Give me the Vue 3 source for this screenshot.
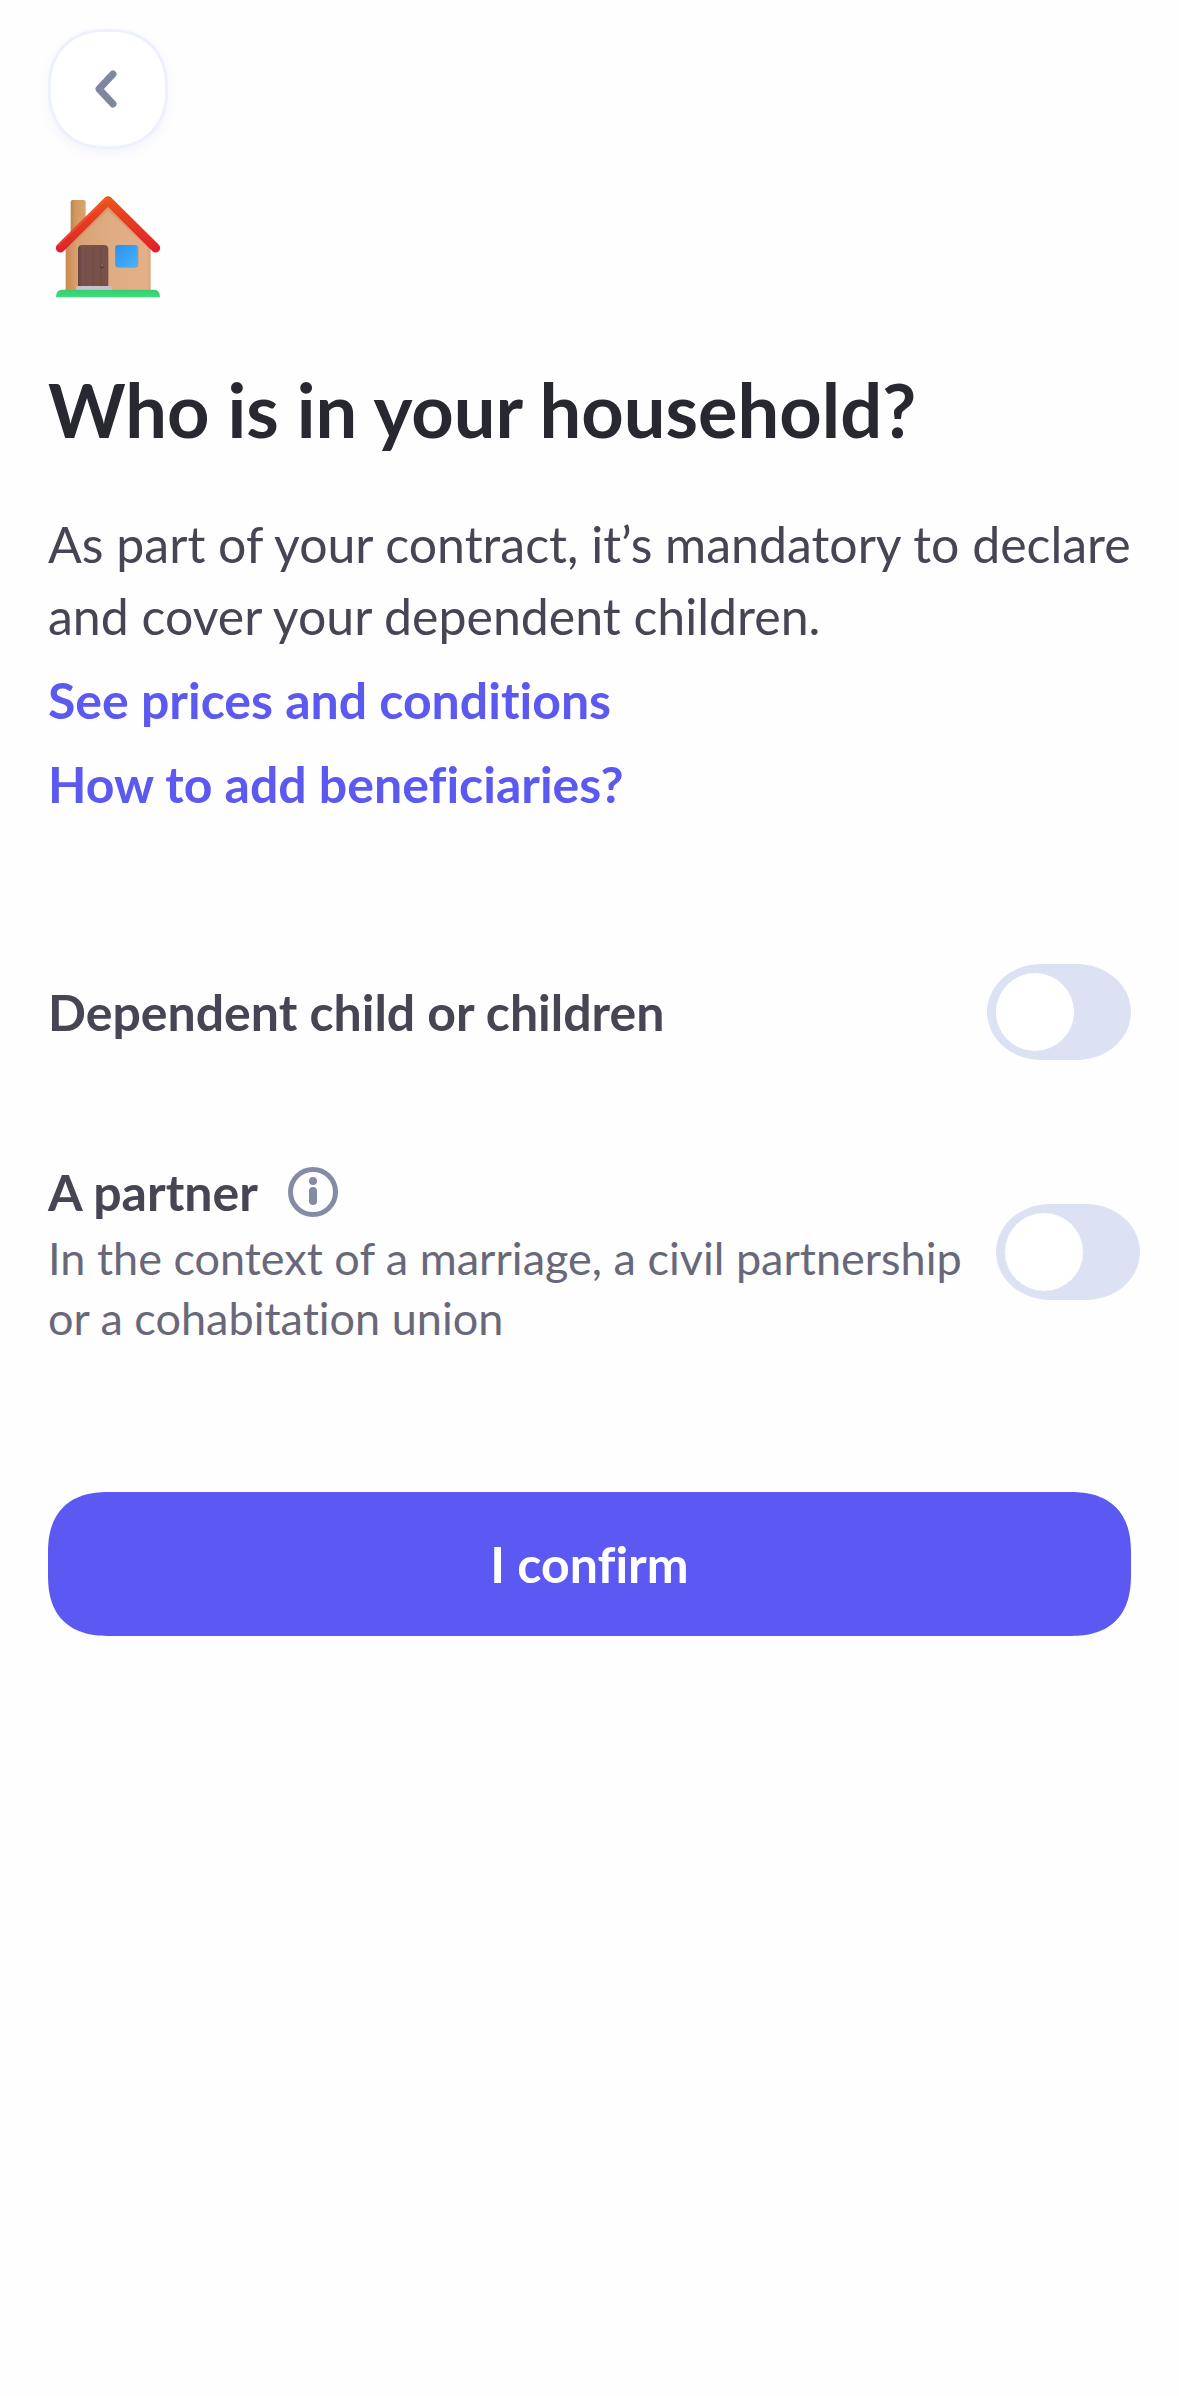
<script setup>
import { ref } from "vue";

// variables
const hasChildren = ref(false);
const hasPartner = ref(false);

// functions
function goBack() {
  window.history.back();
}
function showPartnerInfo() {
}
function confirm() {
}
</script>
<template>
  <main class="page">
    <button class="back" type="button" aria-label="Back" @click="goBack">
      <svg width="120" height="120" viewBox="0 0 120 120">
        <path d="M65 45 L51 60 L65 75" />
      </svg>
    </button>

    <svg class="house" width="120" height="120" viewBox="24 24 360 360" aria-hidden="true">
      <defs>
        <linearGradient id="wall" x1="0" x2="1" y1="0" y2="0">
          <stop offset="0" stop-color="#c98a50" />
          <stop offset="0.14" stop-color="#d9a274" />
          <stop offset="0.5" stop-color="#dfab82" />
          <stop offset="0.95" stop-color="#e4b088" />
          <stop offset="1" stop-color="#d9a47a" />
        </linearGradient>
        <linearGradient id="chimney" x1="0" x2="1" y1="0" y2="0">
          <stop offset="0" stop-color="#b98550" />
          <stop offset="0.3" stop-color="#cf985f" />
          <stop offset="1" stop-color="#d9a66e" />
        </linearGradient>
        <linearGradient id="roof" gradientUnits="userSpaceOnUse" x1="0" x2="0" y1="50" y2="215">
          <stop offset="0" stop-color="#ea5a1c" />
          <stop offset="0.35" stop-color="#e8401f" />
          <stop offset="1" stop-color="#e0202c" />
        </linearGradient>
        <linearGradient id="pane" x1="0" x2="1" y1="0" y2="1">
          <stop offset="0" stop-color="#2b8fee" />
          <stop offset="0.5" stop-color="#3aa2f5" />
          <stop offset="1" stop-color="#48b4f8" />
        </linearGradient>
        <linearGradient id="door" x1="0" x2="1" y1="0" y2="0">
          <stop offset="0" stop-color="#65423f" />
          <stop offset="0.15" stop-color="#7a524d" />
          <stop offset="1" stop-color="#765049" />
        </linearGradient>
        <linearGradient id="grass" x1="0" x2="0" y1="0" y2="1">
          <stop offset="0" stop-color="#38cc70" />
          <stop offset="1" stop-color="#3bdf7c" />
        </linearGradient>
      </defs>
      <path d="M92 66 Q92 60 98 60 H131 Q137 60 137 66 V150 L92 190 Z" fill="url(#chimney)" />
      <path d="M77 195 L204 74 L332 195 V332 H77 Z" fill="url(#wall)" />
      <path d="M77 202 L204 84 L332 202" fill="none" stroke="#c98252" stroke-width="12" opacity="0.35" />
      <path d="M61 204 L204 62 L347 204" fill="none" stroke="url(#roof)" stroke-width="27" stroke-linecap="round" stroke-linejoin="round" />
      <path d="M56 195 L197 56" fill="none" stroke="#f4684a" stroke-width="5" stroke-linecap="round" opacity="0.45" />
      <path d="M114 322 V208 Q114 195 127 195 H192 Q205 195 205 208 V322 Z" fill="url(#door)" />
      <path d="M137 198 V320 M160 198 V320 M182 198 V320" stroke="#694440" stroke-width="2" opacity="0.5" />
      <rect x="180" y="251" width="11" height="14" rx="5" fill="#5a3534" />
      <circle cx="186" cy="256" r="4" fill="#8e625a" />
      <rect x="226" y="195" width="69" height="68" rx="9" fill="#c98a60" />
      <rect x="226" y="195" width="66" height="66" rx="8" fill="url(#pane)" />
      <path d="M48 352 Q48 329 66 329 H342 Q360 329 360 352 Z" fill="url(#grass)" />
      <path d="M108 329 V323 Q108 318 114 318 H209 Q215 318 215 323 V329 Z" fill="#c9c0c8" />
    </svg>

    <h1>Who is in your household?</h1>

    <div class="intro">
      <p>
        As part of your contract, it’s mandatory to declare and cover your
        dependent children.
      </p>
      <a href="#prices">See prices and conditions</a>
      <a href="#beneficiaries">How to add beneficiaries?</a>
    </div>

    <div class="options">
      <div class="option">
        <label class="name" for="children">Dependent child or children</label>
        <input id="children" v-model="hasChildren" class="toggle" type="checkbox" role="switch" />
      </div>
      <div class="option detailed">
        <div>
          <div class="nameLine">
            <label class="name" for="partner">A partner</label>
            <button class="info" type="button" aria-label="More about partners" @click="showPartnerInfo">
              <svg width="50" height="50" viewBox="0 0 50 50">
                <circle cx="25" cy="25" r="22.5" fill="none" stroke="#858ba3" stroke-width="5" />
                <circle cx="25" cy="14" r="4" fill="#858ba3" />
                <rect x="21" y="20" width="8" height="18" rx="4" fill="#858ba3" />
              </svg>
            </button>
          </div>
          <p class="description">
            In the context of a marriage, a civil partnership or a cohabitation union
          </p>
        </div>
        <input id="partner" v-model="hasPartner" class="toggle" type="checkbox" role="switch" />
      </div>
    </div>

    <button class="confirm" type="button" @click="confirm">I confirm</button>
  </main>
</template>

<style>
body {
  margin: 0;
  background: #fefeff;
}
</style>

<style scoped>
.page {
  display: flex;
  flex-direction: column;
  align-items: stretch;
  padding: 29px 48px;
  font-family: Lato, "Noto Sans", sans-serif;
  font-size: 50px;
  line-height: 72px;
  font-variant-ligatures: no-common-ligatures;
  color: #464553;
}

button {
  padding: 0;
  border: 0;
  font: inherit;
  font-variant-ligatures: inherit;
  cursor: pointer;
}

svg {
  display: block;
}

.back {
  align-self: flex-start;
  border-radius: 50px;
  background: #fff;
  box-shadow: inset 0 0 0 3px #edf1fd, 0 4px 12px rgba(80, 90, 160, 0.06);
}

.back path {
  fill: none;
  stroke: #7f86a0;
  stroke-width: 7;
  stroke-linecap: round;
  stroke-linejoin: round;
}

.house {
  margin-top: 39px;
}

h1 {
  margin: 60px 0 56px;
  font-size: 74px;
  line-height: 84px;
  font-weight: 700;
  color: #282830;
}

p {
  margin: 0;
}

.intro {
  display: flex;
  flex-direction: column;
  align-items: flex-start;
  gap: 12px;
}

.intro a {
  font-weight: 700;
  color: #5c59f0;
  text-decoration: none;
}

.options {
  display: flex;
  flex-direction: column;
  gap: 96px;
  margin: 144px 0;
}

.option {
  display: flex;
  align-items: center;
  justify-content: space-between;
  gap: 24px;
}

.detailed {
  margin-right: -9px;
}

.name {
  font-weight: 700;
}

.nameLine {
  display: flex;
  align-items: center;
  gap: 30px;
}

.info {
  background: none;
}

.description {
  font-size: 45px;
  line-height: 60px;
  color: #686879;
}

.toggle {
  flex: none;
  appearance: none;
  width: 144px;
  height: 96px;
  margin: 0;
  padding: 9px;
  border-radius: 54px / 48px;
  background: #dce1f4;
  cursor: pointer;
}

.toggle::before {
  content: "";
  display: block;
  width: 78px;
  height: 78px;
  border-radius: 50%;
  background: #fff;
}

.toggle:checked {
  background: #5c59f0;
}

.toggle:checked::before {
  margin-left: auto;
}

.confirm {
  height: 144px;
  border-radius: 52px;
  background: #5c59f3;
  font-weight: 700;
  color: #fff;
}

@supports (corner-shape: squircle) {
  .back {
    border-radius: 56px;
    corner-shape: superellipse(1.1);
  }

  .confirm {
    border-radius: 62px;
    corner-shape: superellipse(1.3);
  }
}
</style>
